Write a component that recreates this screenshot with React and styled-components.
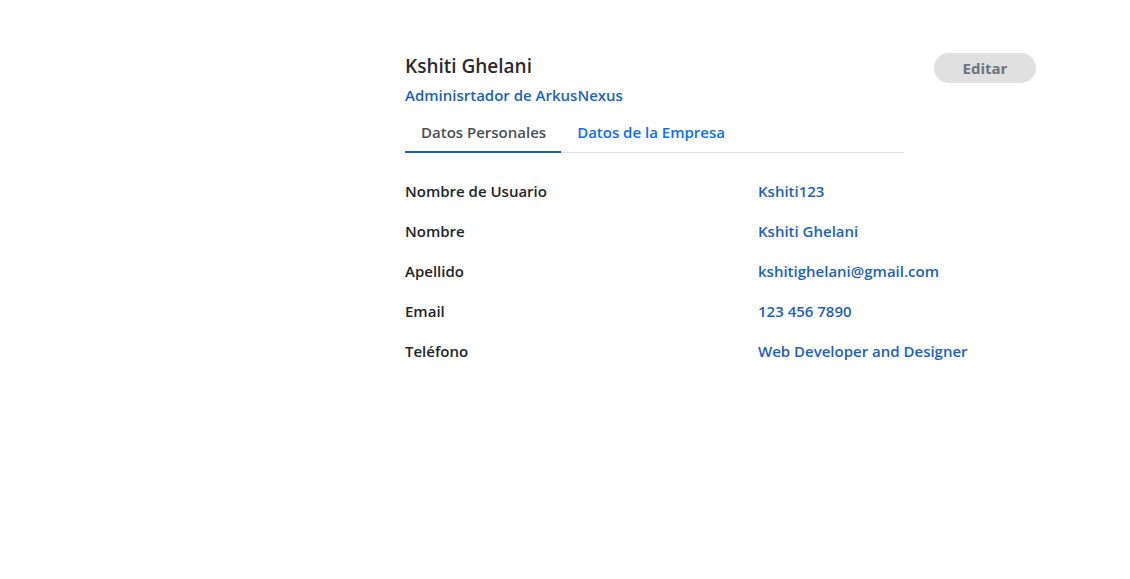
import React from "react";
import styled, { createGlobalStyle } from "styled-components";

const Global = createGlobalStyle`
  html, body { margin: 0; padding: 0; background: #fff; }
  body { font-family: "Open Sans", "Noto Sans", sans-serif; color: #212529; }
`;

const Page = styled.div`
  display: flex;
  padding: 53px 0 0 405px;
  width: 1130px;
  box-sizing: border-box;
`;

const Main = styled.div`
  display: flex;
  flex-direction: column;
  width: 529px;
`;

const Side = styled.div`
  display: flex;
  align-items: flex-start;
`;

const Name = styled.h2`
  margin: 0;
  font-size: 19px;
  font-weight: 600;
  color: #2b2b2b;
  line-height: 26px;
`;

const Role = styled.div`
  margin-top: 5px;
  font-size: 15px;
  font-weight: 600;
  color: #1d5fc4;
  line-height: 22px;
`;

const Tabs = styled.div`
  display: flex;
  width: 499px;
  margin-top: 10px;
  border-bottom: 1px solid #dee2e6;
`;

const Tab = styled.button`
  border: none;
  background: none;
  font-family: inherit;
  font-size: 15px;
  font-weight: 600;
  padding: 6px 15px 9px 16px;
  margin-bottom: -1px;
  color: ${(p) => (p.$active ? "#495057" : "#0d6efd")};
  border-bottom: 2px solid ${(p) => (p.$active ? "#1d5fc4" : "transparent")};
  cursor: pointer;
`;

const Details = styled.div`
  display: grid;
  grid-template-columns: 353px auto;
  row-gap: 18px;
  margin-top: 27px;
`;

const Label = styled.div`
  font-size: 15px;
  font-weight: 600;
  color: #212529;
  line-height: 22px;
`;

const Value = styled.div`
  font-size: 15px;
  font-weight: 600;
  color: #1d5fc4;
  line-height: 22px;
  white-space: nowrap;
`;

const EditButton = styled.button`
  width: 102px;
  height: 30px;
  border: none;
  border-radius: 15px;
  background: #e0e0e0;
  color: #6c757d;
  font-family: inherit;
  font-size: 15px;
  font-weight: 700;
  cursor: pointer;
`;

const rows = [
  ["Nombre de Usuario", "Kshiti123"],
  ["Nombre", "Kshiti Ghelani"],
  ["Apellido", "kshitighelani@gmail.com"],
  ["Email", "123 456 7890"],
  ["Teléfono", "Web Developer and Designer"],
];

export default function App() {
  return (
    <>
      <Global />
      <Page>
        <Main>
          <Name>Kshiti Ghelani</Name>
          <Role>Adminisrtador de ArkusNexus</Role>
          <Tabs>
            <Tab $active>Datos Personales</Tab>
            <Tab>Datos de la Empresa</Tab>
          </Tabs>
          <Details>
            {rows.map(([l, v]) => (
              <React.Fragment key={l}>
                <Label>{l}</Label>
                <Value>{v}</Value>
              </React.Fragment>
            ))}
          </Details>
        </Main>
        <Side>
          <EditButton>Editar</EditButton>
        </Side>
      </Page>
    </>
  );
}
